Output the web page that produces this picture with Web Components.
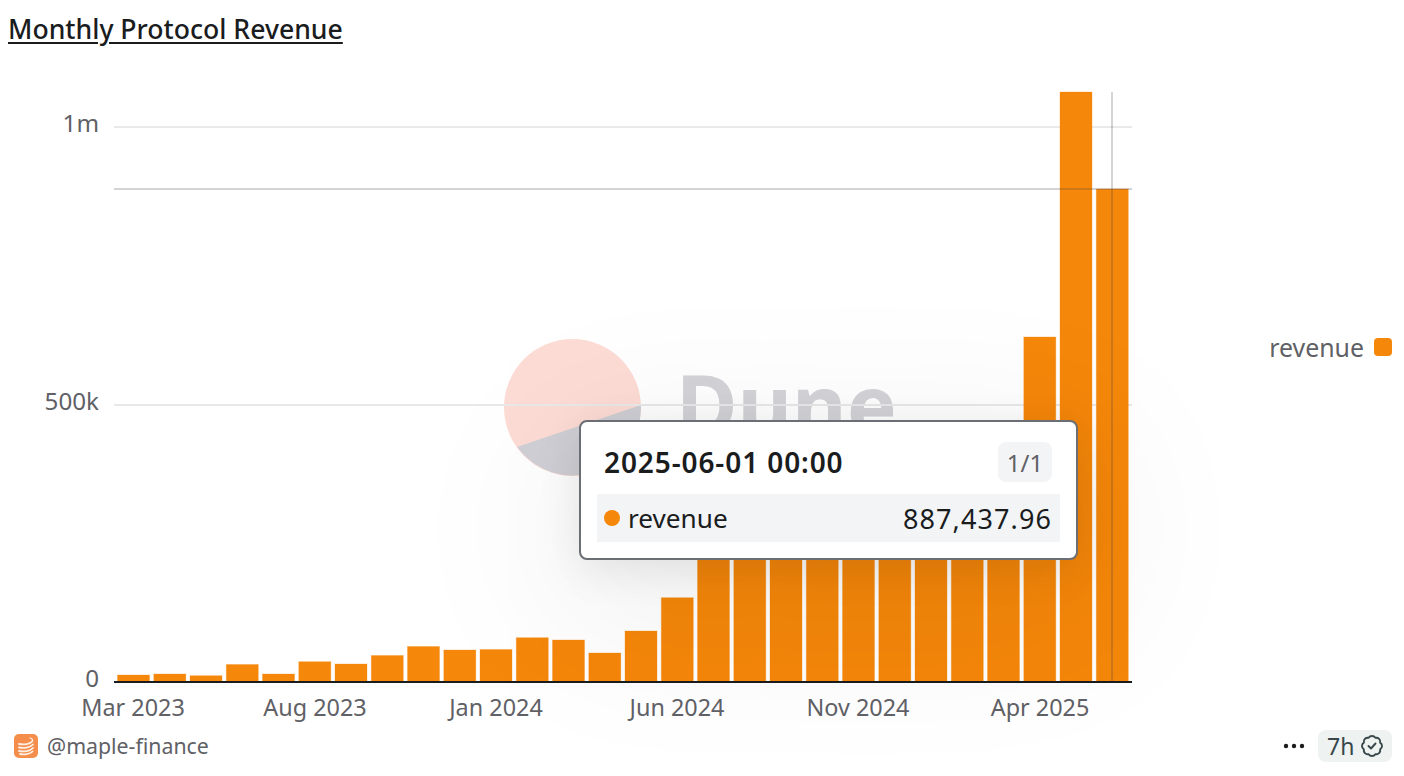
<!DOCTYPE html>
<html>
<head>
<meta charset="utf-8">
<title>Monthly Protocol Revenue</title>
<style>
	html, body { margin: 0; background: #fff; }
</style>
</head>
<body>
<query-card>
	<h-title slot="title">Monthly Protocol Revenue</h-title>
	<bar-chart slot="chart">
		<chart-tooltip date="2025-06-01 00:00" count="1/1" series="revenue" value="887,437.96"></chart-tooltip>
	</bar-chart>
	<chart-legend slot="legend">revenue</chart-legend>
	<card-footer slot="footer" owner="@maple-finance" age="7h"></card-footer>
</query-card>

<script>
const FONT = `"Noto Sans", "Liberation Sans", sans-serif`;

class QueryCard extends HTMLElement {
	constructor() {
		super();
		this.attachShadow({ mode: "open" }).innerHTML = `
			<style>
				:host {
					display: flex;
					flex-direction: column;
					width: 1404px;
					height: 776px;
					overflow: hidden;
					font-family: ${FONT};
					background: #fff;
				}
				.head { height: 60px; }
				.body { display: flex; height: 670px; }
				.side { flex: 1; display: flex; align-items: center; justify-content: flex-end; padding: 0 12px 96px 0; }
			</style>
			<div class="head"><slot name="title"></slot></div>
			<div class="body">
				<slot name="chart"></slot>
				<div class="side"><slot name="legend"></slot></div>
			</div>
			<slot name="footer"></slot>
		`;
	}
}

class HTitle extends HTMLElement {
	constructor() {
		super();
		this.attachShadow({ mode: "open" }).innerHTML = `
			<style>
				:host {
					display: block;
					padding: 11px 0 0 8px;
					font-size: 26.6px;
					line-height: 36px;
					font-weight: 500;
					color: #1a1c1e;
				}
				span { text-decoration: underline; text-decoration-thickness: 2px; text-underline-offset: 3px; }
			</style>
			<span><slot></slot></span>
		`;
	}
}

// tops of the 28 monthly bars, in page pixels (the ones behind the tooltip are guessed)
const TOPS = [675, 674, 675.7, 664.5, 674, 661.7, 664, 655.5, 646.5, 650, 649.5, 637.7, 640, 653, 631, 597.7,
	520, 510, 505, 500, 490, 480, 470, 460, 445, 337, 92, 189];
const X_TICKS = [["Mar 2023", 133], ["Aug 2023", 315], ["Jan 2024", 496], ["Jun 2024", 677], ["Nov 2024", 858], ["Apr 2025", 1040]];
const Y_TICKS = [["1m", 132], ["500k", 410], ["0", 687]];

class BarChart extends HTMLElement {
	constructor() {
		super();
		const bars = TOPS.map((top, i) => {
			const x = 117.5 + i * 36.25;
			return `<rect x="${x.toFixed(1)}" y="${top}" width="32" height="${681 - top}" />`;
		}).join("");
		const xLabels = X_TICKS.map(([t, x]) => `<text x="${x}" y="716" text-anchor="middle">${t}</text>`).join("");
		const yLabels = Y_TICKS.map(([t, y]) => `<text class="y" x="99" y="${y}" text-anchor="end">${t}</text>`).join("");

		this.attachShadow({ mode: "open" }).innerHTML = `
			<style>
				:host {
					display: block;
					position: relative;
					flex: 0 0 1140px;
					height: 670px;
				}
				svg { display: block; }
				text { font-size: 23.4px; fill: #5f6166; }
				text.y { font-size: 24.2px; }
				.mark { position: absolute; left: 504px; top: 279px; display: flex; align-items: center; gap: 35px; }
				.mark span { font-size: 84px; line-height: 114px; font-weight: 700; color: #d3d3d8; margin-top: -8px; }
				.bars rect { fill: #f5870a; stroke: rgba(245, 135, 10, .3); stroke-width: 1; }
			</style>
			<div class="mark">
				<svg width="137" height="137" viewBox="0 0 137 137">
					<circle cx="68.5" cy="68.5" r="68.5" fill="#fddcd5" />
					<path d="M137 66 A68.5 68.5 0 0 1 13 108 Z" fill="#d0d0d6" />
				</svg>
				<span>Dune</span>
			</div>
			<svg style="position:absolute;left:0;top:0" width="1140" height="670" viewBox="0 60 1140 670">
				<g stroke="#e9e9ea" stroke-width="2">
					<line x1="114" x2="1132" y1="127" y2="127" />
					<line x1="114" x2="1132" y1="405" y2="405" />
				</g>
				<g class="bars">${bars}</g>
				<line x1="114" x2="1132" y1="682" y2="682" stroke="#1a1c1e" stroke-width="2" />
				<line x1="114" x2="1132" y1="189" y2="189" stroke="rgba(60,60,70,.22)" stroke-width="2" />
				<line x1="1112" x2="1112" y1="92" y2="682" stroke="rgba(60,60,70,.22)" stroke-width="2" />
				${xLabels}
				${yLabels}
			</svg>
			<slot></slot>
		`;
	}
}

class ChartTooltip extends HTMLElement {
	constructor() {
		super();
		this.attachShadow({ mode: "open" }).innerHTML = `
			<style>
				:host {
					position: absolute;
					left: 579px;
					top: 360px;
					box-sizing: border-box;
					width: 499px;
					height: 140px;
					padding: 20px 16px 0;
					background: #fff;
					border: 2px solid #6b6e75;
					border-radius: 8px;
					box-shadow: 0 10px 44px rgba(0, 0, 0, .09), 0 40px 170px 30px rgba(0, 0, 0, .06);
					color: #1a1c1e;
				}
				.top { display: flex; align-items: center; justify-content: space-between; height: 40px; padding: 0 8px; }
				.date { font-size: 28px; font-weight: 600; letter-spacing: .9px; line-height: 40px; margin-left: -1px; }
				.count { display: flex; align-items: center; justify-content: center; width: 54px; height: 40px; border-radius: 8px; background: #f3f4f6; color: #5f6166; font-size: 24px; }
				.row { display: flex; align-items: center; height: 48px; margin-top: 12px; padding: 0 8px; background: #f3f4f6; }
				.dot { width: 16px; height: 16px; border-radius: 50%; background: #f5870a; margin: 0 8px 0 -1px; }
				.series { font-size: 26.2px; }
				.value { margin-left: auto; font-size: 27px; letter-spacing: 1.1px; }
			</style>
			<div class="top"><span class="date"></span><span class="count"></span></div>
			<div class="row"><i class="dot"></i><span class="series"></span><span class="value"></span></div>
		`;
	}

	connectedCallback() {
		const root = this.shadowRoot;
		root.querySelector(".date").textContent = this.getAttribute("date");
		root.querySelector(".count").textContent = this.getAttribute("count");
		root.querySelector(".series").textContent = this.getAttribute("series");
		root.querySelector(".value").textContent = this.getAttribute("value");
	}
}

class ChartLegend extends HTMLElement {
	constructor() {
		super();
		this.attachShadow({ mode: "open" }).innerHTML = `
			<style>
				:host { display: inline-flex; align-items: center; gap: 10px; font-size: 24.9px; color: #5f6166; }
				i { width: 18px; height: 18px; border-radius: 4px; background: #f5870a; }
			</style>
			<slot></slot><i></i>
		`;
	}
}

class CardFooter extends HTMLElement {
	constructor() {
		super();
		this.attachShadow({ mode: "open" }).innerHTML = `
			<style>
				:host {
					display: flex;
					align-items: center;
					height: 32px;
					padding: 0 12px 0 14px;
					color: #5f6166;
					font-size: 21.3px;
				}
				.logo { width: 24px; height: 24px; margin-right: 9px; }
				.owner { margin-top: -2px; }
				.more { margin-left: auto; margin-right: 13px; width: 22px; height: 6px; }
				.age { display: flex; align-items: center; justify-content: space-between; box-sizing: border-box; width: 74px; height: 32px; padding: 0 8px 0 9px; border-radius: 8px; background: #eef2f0; color: #37474a; font-size: 23px; }
				.age svg { width: 24px; height: 24px; }
			</style>
			<svg class="logo" viewBox="0 0 24 24">
				<rect width="24" height="24" rx="5" fill="#f58e4a" />
				<g fill="none" stroke="#fff" stroke-linecap="round" opacity=".85">
					<path stroke-width="1.2" d="M16 4c2 .5 3 1.500 2.500 3" />
					<path stroke-width="1.8" d="M5 10c4.500 1 11 .5 13.500-3" />
					<path stroke-width="1.8" d="M5 13.500c4.500 1 11 .5 14-3" />
					<path stroke-width="1.8" d="M5 17c4.500 1 11 .5 14-3" />
					<path stroke-width="1.800" d="M6 20c4 .8 10 .3 12.500-2.500" />
				</g>
			</svg>
			<span class="owner"></span>
			<svg class="more" viewBox="0 0 22 6" fill="#1a1c1e">
				<circle cx="3" cy="3" r="2.2" /><circle cx="11" cy="3" r="2.2" /><circle cx="19" cy="3" r="2.2" />
			</svg>
			<div class="age">
				<span class="when"></span>
				<svg viewBox="0 0 24 24" fill="none" stroke="#37474a" stroke-width="1.9" stroke-linecap="round" stroke-linejoin="round">
					<path d="M3.85 8.62a4 4 0 0 1 4.78-4.77 4 4 0 0 1 6.74 0 4 4 0 0 1 4.78 4.78 4 4 0 0 1 0 6.74 4 4 0 0 1-4.77 4.78 4 4 0 0 1-6.75 0 4 4 0 0 1-4.78-4.77 4 4 0 0 1 0-6.76Z" />
					<path d="m8.500 12 2.500 2.500 4.500-5" />
				</svg>
			</div>
		`;
	}

	connectedCallback() {
		this.shadowRoot.querySelector(".owner").textContent = this.getAttribute("owner");
		this.shadowRoot.querySelector(".when").textContent = this.getAttribute("age");
	}
}

customElements.define("query-card", QueryCard);
customElements.define("h-title", HTitle);
customElements.define("bar-chart", BarChart);
customElements.define("chart-tooltip", ChartTooltip);
customElements.define("chart-legend", ChartLegend);
customElements.define("card-footer", CardFooter);
</script>
</body>
</html>
